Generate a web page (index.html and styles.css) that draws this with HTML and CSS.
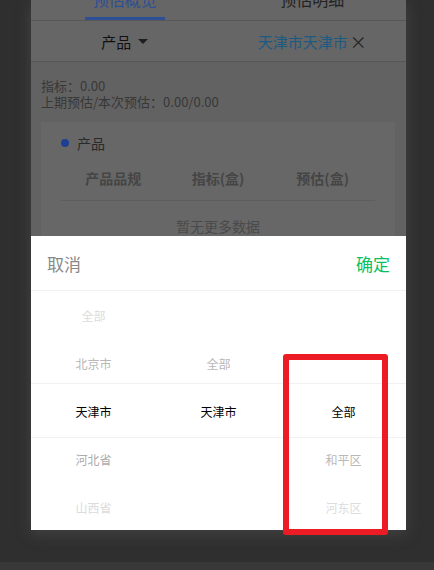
FILE: index.html
```html
<!DOCTYPE html>
<html lang="zh">
<head>
<meta charset="utf-8">
<link rel="stylesheet" href="styles.css">
</head>
<body>
<div class="stage">
  <div class="phone">
    <div class="tabs">
      <div class="tab active"><span class="tab-label">预估概览</span><span class="tab-bar"></span></div>
      <div class="tab"><span class="tab-label">预估明细</span><span class="tab-bar none"></span></div>
    </div>
    <div class="filter">
      <div class="filter-item">产品<span class="caret"></span></div>
      <div class="filter-item region">天津市天津市<span class="close">×</span></div>
    </div>
    <div class="info">
      <div>指标：0.00</div>
      <div>上期预估/本次预估：0.00/0.00</div>
    </div>
    <div class="card">
      <div class="card-title"><span class="dot"></span>产品</div>
      <div class="thead">
        <span>产品品规</span><span>指标(盒)</span><span>预估(盒)</span>
      </div>
      <div class="empty">暂无更多数据</div>
    </div>

    <div class="sheet">
      <div class="sheet-head">
        <span class="cancel">取消</span>
        <span class="ok">确定</span>
      </div>
      <div class="picker">
        <div class="indicator"></div>
        <div class="col">
          <div class="opt far">全部</div>
          <div class="opt near">北京市</div>
          <div class="opt sel">天津市</div>
          <div class="opt near2">河北省</div>
          <div class="opt far">山西省</div>
        </div>
        <div class="col">
          <div class="opt"></div>
          <div class="opt near">全部</div>
          <div class="opt sel">天津市</div>
          <div class="opt"></div>
          <div class="opt"></div>
        </div>
        <div class="col">
          <div class="opt"></div>
          <div class="opt"></div>
          <div class="opt sel">全部</div>
          <div class="opt near">和平区</div>
          <div class="opt far">河东区</div>
        </div>
      </div>
    </div>
  </div>
  <div class="bottom-band"></div>
</div>
<div class="highlight"></div>
</body>
</html>
```
FILE: styles.css
```css
* { box-sizing: border-box; }
html, body { margin: 0; padding: 0; }
body {
  background: #2f2f2f;
  width: 434px;
  height: 570px;
  overflow: hidden;
  position: relative;
  font-family: "Noto Sans CJK SC", "Noto Sans", sans-serif;
}
.stage {
  display: flex;
  flex-direction: column;
}
.phone {
  width: 375px;
  height: 530px;
  margin-left: 31px;
  background: #626262;
  position: relative;
  overflow: hidden;
  box-shadow: 0 4px 14px rgba(90, 90, 90, 0.45);
}
.bottom-band {
  margin-top: 32px;
  height: 8px;
  background: #383838;
}

/* tabs */
.tabs {
  display: flex;
  height: 41px;
  margin-top: -20px;
  background: #666;
  border-bottom: 1px solid #575757;
}
.tab {
  flex: 1;
  display: flex;
  flex-direction: column;
  align-items: center;
  justify-content: flex-end;
}
.tab-label {
  font-size: 16px;
  line-height: 24px;
  margin-bottom: 6px;
  color: #222;
}
.tab.active .tab-label { color: #2d4f96; }
.tab-bar {
  width: 80px;
  height: 3px;
  background: #2d4f96;
}
.tab-bar.none { background: transparent; }

/* filter */
.filter {
  display: flex;
  height: 41px;
  background: #666;
  border-bottom: 1px solid #575757;
}
.filter-item {
  flex: 1;
  display: flex;
  align-items: center;
  justify-content: center;
  font-size: 15px;
  color: #111;
}
.caret {
  width: 0;
  height: 0;
  border-left: 5px solid transparent;
  border-right: 5px solid transparent;
  border-top: 5px solid #1e1e1e;
  margin-left: 7px;
}
.region { color: #1d5a82; }
.close {
  color: #222;
  font-size: 17px;
  margin-left: 2px;
  line-height: 1;
}

/* info */
.info {
  padding: 16px 10px 0;
  font-size: 13px;
  line-height: 16px;
  color: #383838;
}

/* card */
.card {
  margin: 12px 11px 0 10px;
  background: #676767;
  padding: 11px 20px 0;
  height: 200px;
}
.card-title {
  display: flex;
  align-items: center;
  font-size: 14px;
  line-height: 20px;
  color: #2a2a2a;
}
.dot {
  width: 8px;
  height: 8px;
  border-radius: 50%;
  background: #1f3f93;
  margin-right: 8px;
}
.thead {
  display: grid;
  grid-template-columns: 1fr 1fr 1fr;
  margin-top: 15px;
  padding-bottom: 12px;
  border-bottom: 1px solid #5d5d5d;
  font-size: 14px;
  line-height: 20px;
  font-weight: bold;
  color: #454545;
  text-align: center;
}
.empty {
  padding-top: 15px;
  text-align: center;
  font-size: 14px;
  line-height: 20px;
  color: #4a4a4a;
}

/* sheet */
.sheet {
  position: absolute;
  left: 0;
  right: 0;
  bottom: 0;
  height: 294px;
  background: #fff;
}
.sheet-head {
  height: 55px;
  border-bottom: 1px solid #f1f1f1;
  display: flex;
  align-items: center;
  justify-content: space-between;
  padding: 0 16px;
  font-size: 17px;
}
.cancel { color: #888; }
.ok { color: #07c160; }
.picker {
  position: relative;
  display: grid;
  grid-template-columns: 1fr 1fr 1fr;
}
.indicator {
  position: absolute;
  left: 0;
  right: 0;
  top: 92px;
  height: 55px;
  border-top: 1px solid #f1f1f1;
  border-bottom: 1px solid #f1f1f1;
}
.col {
  display: flex;
  flex-direction: column;
}
.opt {
  height: 48px;
  display: flex;
  align-items: center;
  justify-content: center;
  font-size: 12px;
  color: #000;
}
.opt.near { color: #b8b8b8; }
.opt.near2 { color: #acacac; }
.opt.far { color: #dcdcdc; }

/* annotation */
.highlight {
  position: absolute;
  left: 283px;
  top: 354px;
  width: 105px;
  height: 181px;
  border: 6px solid #ed1c24;
  border-radius: 3px;
}
```
